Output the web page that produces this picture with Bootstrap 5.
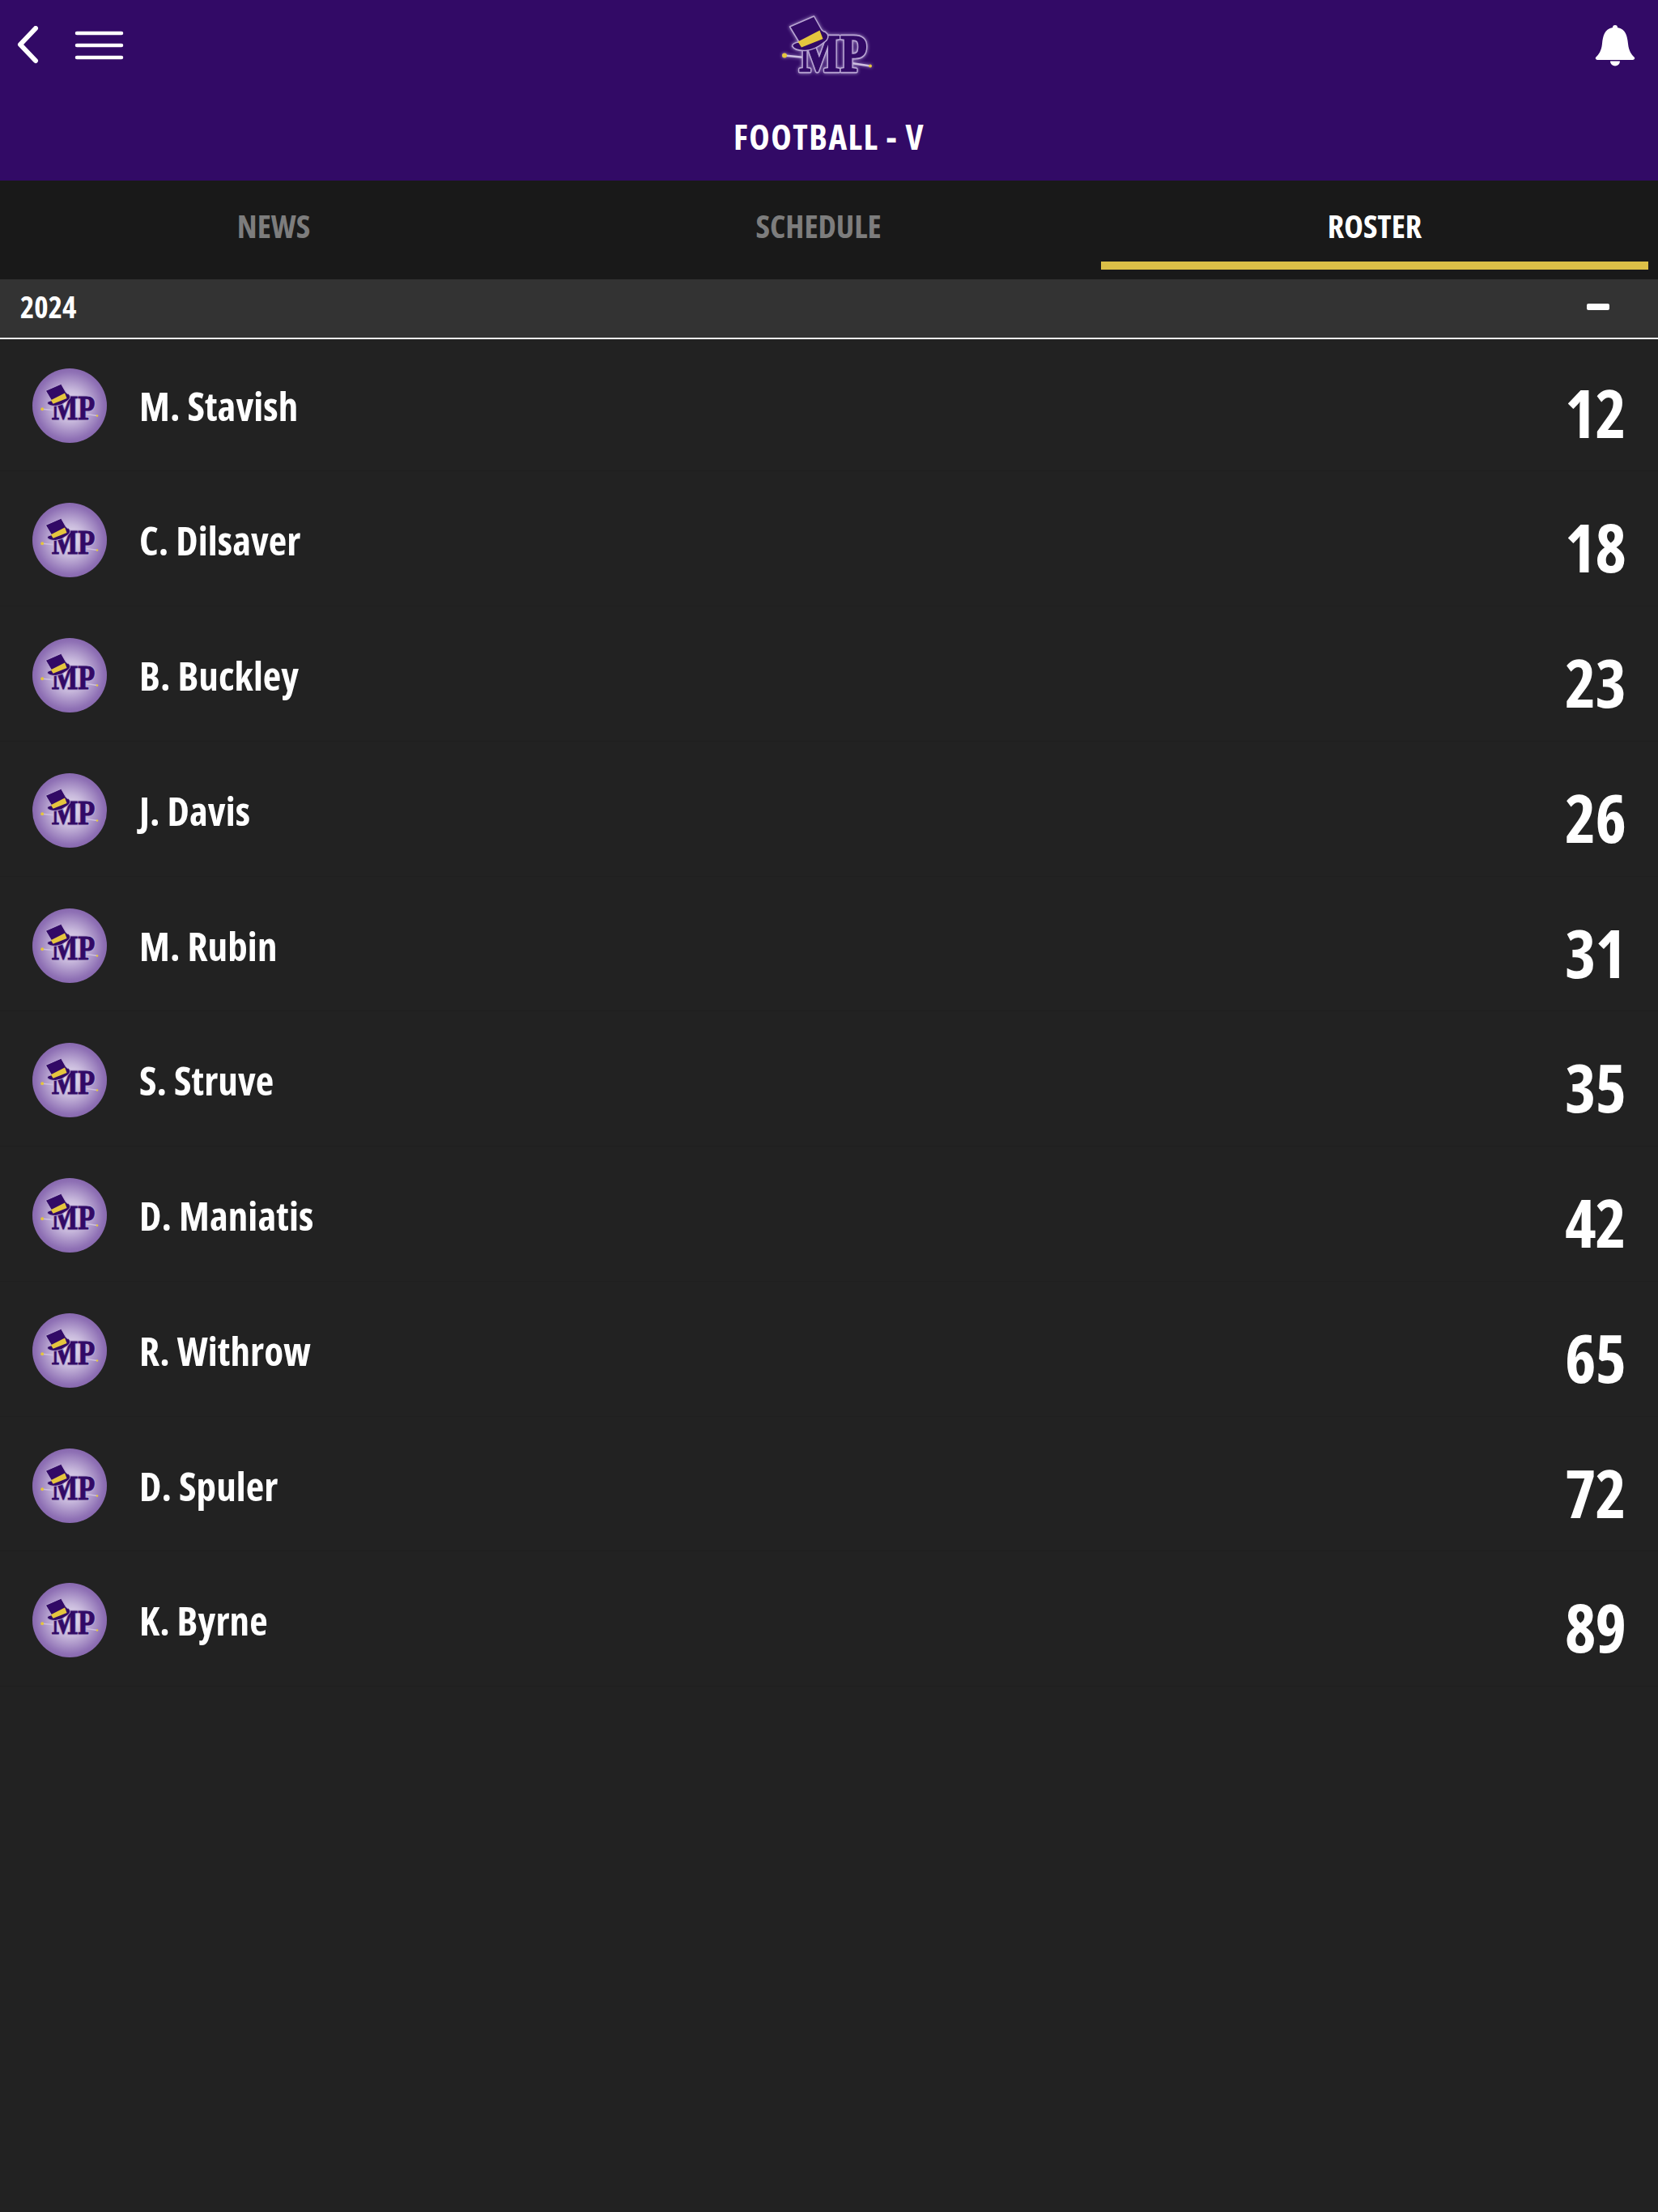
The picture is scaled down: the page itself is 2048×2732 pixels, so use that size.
<!DOCTYPE html>
<html lang="en">
<head>
<meta charset="utf-8">
<title>Football - V Roster</title>
<link href="https://cdn.jsdelivr.net/npm/bootstrap@5.3.0/dist/css/bootstrap.min.css" rel="stylesheet">
<style>
html,body{background:#222;}
body{font-family:"Open Sans","Liberation Sans",sans-serif;font-stretch:75%;font-weight:700;color:#fff;min-height:2732px;}
.app-head{background:#320a66;height:223px;}
.head-bar{height:112px;}
.head-left{gap:41px;padding-left:20px;}
.chev-ic{margin-top:32px;}
.burger-ic{margin-top:35px;}
.bell-ic{margin:30px 28px 0 0;}
.head-logo{margin-top:15px;filter:drop-shadow(0 0 2px #a48fc6);}
.head-title{font-size:43px;letter-spacing:1.5px;line-height:56px;padding-top:29px;}
.tabs-row{background:#191919;height:122px;padding-right:12px;}
.tab-item{flex:none;width:676px;text-align:center;font-size:40px;color:#7d7d7d;line-height:52px;padding-top:30px;height:110px;}
.tab-mid{width:670px;}
.tab-item.is-on{color:#fff;border-bottom:10px solid #dbbf47;margin-left:14px;}
.season-bar{background:#333;height:73.5px;border-bottom:2px solid #f2f2f2;padding:0 0 5px 25px;font-size:37px;}
.season-bar .dash{width:28px;height:8px;border-radius:2px;background:#fff;margin-right:60px;margin-top:2px;}
.roster-row{height:166.75px;padding:0 40px;position:relative;}
.roster-row::after{content:"";position:absolute;left:0;right:0;bottom:3px;height:1px;background:#1f1f1f;}
.avatar-ic{width:92px;height:92px;border-radius:50%;margin-top:36px;flex:none;background:radial-gradient(circle,#ece7f2 0%,#c8b9dc 30%,#8f71b5 64%,#6a4496 100%);}
.roster-name{font-size:49px;letter-spacing:.1px;line-height:64px;margin-left:40px;margin-top:50px;}
.roster-num{font-size:82px;line-height:100px;margin-top:40px;margin-right:0;letter-spacing:-1px;}
.mp-letters{font-family:"Liberation Serif",serif;font-weight:700;font-size:66px;}
.mp-edge{stroke:#b9a6d3;stroke-width:5px;stroke-linejoin:round;}
.mp-core{fill:#320a66;stroke:#320a66;stroke-width:1.4px;}
</style>
</head>
<body>
<svg width="0" height="0" class="d-block position-absolute">
  <defs>
    <g id="mp-logo">
      <line x1="5" y1="53.5" x2="30" y2="56" stroke="#cdbfe0" stroke-width="2.5"/>
      <line x1="88" y1="63" x2="111" y2="66.5" stroke="#cdbfe0" stroke-width="2.5"/>
      <circle cx="5" cy="53.5" r="3" fill="#e5c63e"/>
      <circle cx="111" cy="66.5" r="2" fill="#e5c63e"/>
      <text class="mp-letters mp-edge" x="23" y="73" textLength="84" lengthAdjust="spacingAndGlyphs" aria-hidden="true">MP</text>
      <text class="mp-letters mp-core" x="23" y="73" textLength="84" lengthAdjust="spacingAndGlyphs">MP</text>
      <path d="M11.5 18 L41.5 5 L51 22 Q54 25 55 24 L58 27 Q61 33 53 38 Q42 47 31 47.5 Q18 48 14.5 42 Q15 38 23 37 Z" fill="#320a66" stroke="#b9a6d3" stroke-width="1.5" stroke-linejoin="round"/>
      <path d="M21.5 36.5 L48.5 22.5 L52.5 33 L26 43.5 Z" fill="#e5c63e"/>
    </g>
  </defs>
</svg>

<header class="app-head">
  <div class="head-bar d-flex align-items-start justify-content-between position-relative">
    <div class="head-left d-flex">
      <svg class="chev-ic" width="30" height="50" viewBox="0 0 30 50"><path d="M24 3 L5 23 L24 43" fill="none" stroke="#fff" stroke-width="6" stroke-linecap="round" stroke-linejoin="round"/></svg>
      <svg class="burger-ic" width="62" height="42" viewBox="0 0 62 42"><g stroke="#fff" stroke-width="4.5" stroke-linecap="round"><line x1="4" y1="6" x2="59" y2="6"/><line x1="4" y1="21" x2="59" y2="21"/><line x1="4" y1="36" x2="59" y2="36"/></g></svg>
    </div>
    <svg class="head-logo position-absolute top-0 start-50 translate-middle-x" width="120" height="80" viewBox="0 0 120 80"><use href="#mp-logo"/></svg>
    <svg class="bell-ic" width="50" height="52" viewBox="0 0 50 52"><path d="M25 1 a3 3 0 0 1 3 3 C38 6 40 14 41 24 C42 33 45 37 49 41 Q50 43 47 44 L3 44 Q0 43 1 41 C5 37 8 33 9 24 C10 14 12 6 22 4 a3 3 0 0 1 3 -3 Z" fill="#fff"/><path d="M19 45.5 A6 6 0 0 0 31 45.5 Z" fill="#fff"/></svg>
  </div>
  <div class="head-title text-center">FOOTBALL - V</div>
</header>

<nav class="tabs-row d-flex">
  <div class="tab-item">NEWS</div>
  <div class="tab-item tab-mid">SCHEDULE</div>
  <div class="tab-item is-on">ROSTER</div>
</nav>

<div class="season-bar d-flex align-items-center justify-content-between">
  <span>2024</span>
  <span class="dash d-block"></span>
</div>

<main>
  <div class="roster-row d-flex align-items-start">
    <svg class="avatar-ic" viewBox="0 0 92 92"><use href="#mp-logo" transform="translate(9 16) scale(.64)"/></svg>
    <div class="roster-name flex-grow-1">M. Stavish</div>
    <div class="roster-num">12</div>
  </div>
  <div class="roster-row d-flex align-items-start">
    <svg class="avatar-ic" viewBox="0 0 92 92"><use href="#mp-logo" transform="translate(9 16) scale(.64)"/></svg>
    <div class="roster-name flex-grow-1">C. Dilsaver</div>
    <div class="roster-num">18</div>
  </div>
  <div class="roster-row d-flex align-items-start">
    <svg class="avatar-ic" viewBox="0 0 92 92"><use href="#mp-logo" transform="translate(9 16) scale(.64)"/></svg>
    <div class="roster-name flex-grow-1">B. Buckley</div>
    <div class="roster-num">23</div>
  </div>
  <div class="roster-row d-flex align-items-start">
    <svg class="avatar-ic" viewBox="0 0 92 92"><use href="#mp-logo" transform="translate(9 16) scale(.64)"/></svg>
    <div class="roster-name flex-grow-1">J. Davis</div>
    <div class="roster-num">26</div>
  </div>
  <div class="roster-row d-flex align-items-start">
    <svg class="avatar-ic" viewBox="0 0 92 92"><use href="#mp-logo" transform="translate(9 16) scale(.64)"/></svg>
    <div class="roster-name flex-grow-1">M. Rubin</div>
    <div class="roster-num">31</div>
  </div>
  <div class="roster-row d-flex align-items-start">
    <svg class="avatar-ic" viewBox="0 0 92 92"><use href="#mp-logo" transform="translate(9 16) scale(.64)"/></svg>
    <div class="roster-name flex-grow-1">S. Struve</div>
    <div class="roster-num">35</div>
  </div>
  <div class="roster-row d-flex align-items-start">
    <svg class="avatar-ic" viewBox="0 0 92 92"><use href="#mp-logo" transform="translate(9 16) scale(.64)"/></svg>
    <div class="roster-name flex-grow-1">D. Maniatis</div>
    <div class="roster-num">42</div>
  </div>
  <div class="roster-row d-flex align-items-start">
    <svg class="avatar-ic" viewBox="0 0 92 92"><use href="#mp-logo" transform="translate(9 16) scale(.64)"/></svg>
    <div class="roster-name flex-grow-1">R. Withrow</div>
    <div class="roster-num">65</div>
  </div>
  <div class="roster-row d-flex align-items-start">
    <svg class="avatar-ic" viewBox="0 0 92 92"><use href="#mp-logo" transform="translate(9 16) scale(.64)"/></svg>
    <div class="roster-name flex-grow-1">D. Spuler</div>
    <div class="roster-num">72</div>
  </div>
  <div class="roster-row d-flex align-items-start">
    <svg class="avatar-ic" viewBox="0 0 92 92"><use href="#mp-logo" transform="translate(9 16) scale(.64)"/></svg>
    <div class="roster-name flex-grow-1">K. Byrne</div>
    <div class="roster-num">89</div>
  </div>
</main>
<script src="https://cdn.jsdelivr.net/npm/bootstrap@5.3.0/dist/js/bootstrap.bundle.min.js"></script>
</body>
</html>
